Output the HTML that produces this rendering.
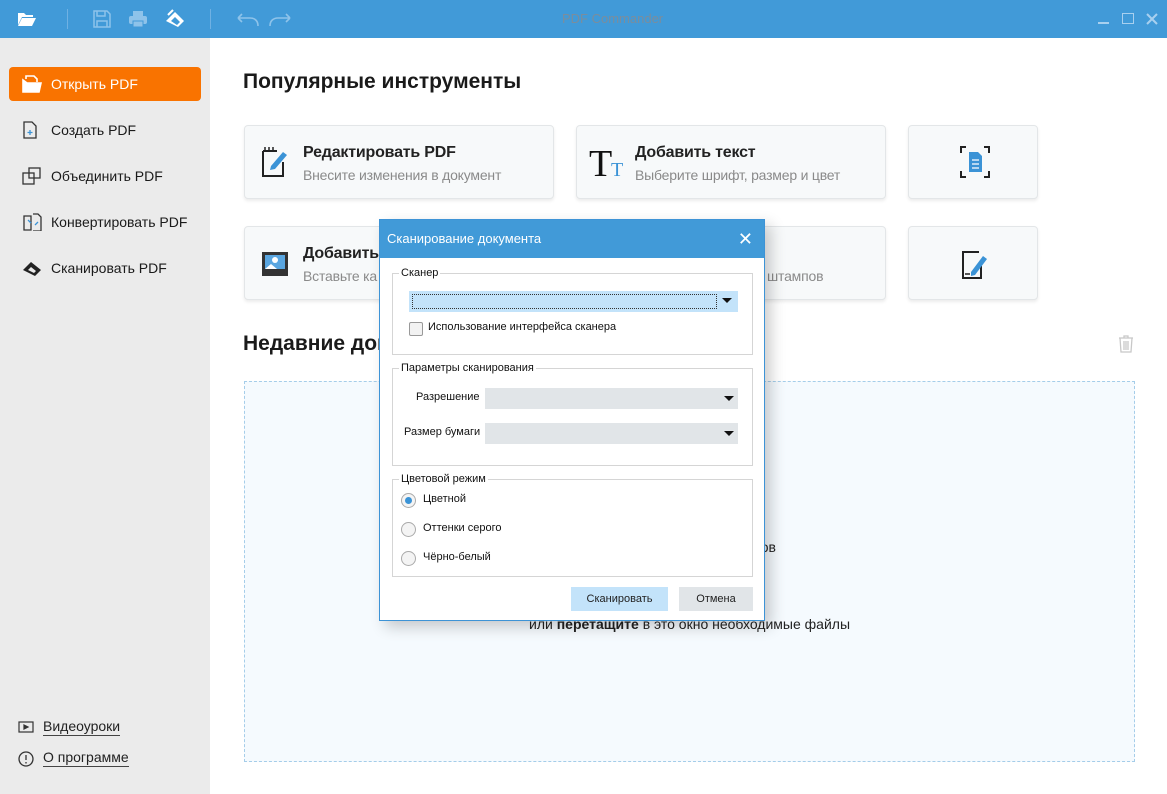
<!DOCTYPE html>
<html><head><meta charset="utf-8"><style>
*{box-sizing:border-box;margin:0;padding:0}
body{width:1167px;height:794px;position:relative;overflow:hidden;font-family:"Liberation Sans","DejaVu Sans",sans-serif;background:#fff;color:#222}
.abs{position:absolute}
#top{left:0;top:0;width:1167px;height:38px;background:#419ad8}
#side{left:0;top:38px;width:210px;height:756px;background:#ebebeb}
.nav{position:absolute;left:9px;width:192px;height:34px;font-size:14px;line-height:34px;padding-left:42px;color:#1a1a1a}
.nav svg{position:absolute;left:13px;top:8px}
.card{position:absolute;background:#f7f9fa;border:1px solid #e3e6e8;border-radius:4px;box-shadow:0 2px 3px rgba(0,0,0,.08)}
.card .t{position:absolute;left:58px;top:18px;font-size:16px;font-weight:bold;color:#222;letter-spacing:-0.2px}
.card .s{position:absolute;left:58px;top:41px;font-size:14px;color:#8a8a8a;letter-spacing:-0.2px}
.card svg{position:absolute}
#dlg{left:379px;top:219px;width:386px;height:402px;background:#fff;border:1px solid #3d93d6;box-shadow:6px 6px 14px rgba(0,0,0,.2)}
#dlg .hd{position:absolute;left:0;top:0;width:100%;height:38px;background:#419ad8;color:#fff;font-size:13px;line-height:38px;padding-left:7px}
fieldset{position:absolute;border:1px solid #d5d5d5;left:12px;width:361px}
legend{font-size:11px;margin-left:6px;padding:0 2px;color:#111}
.lbl{position:absolute;font-size:11px;color:#111}
.cb{position:absolute;background:#e1e5e8;height:21px}
.cb:after{content:"";position:absolute;right:4px;top:8px;border-left:5px solid transparent;border-right:5px solid transparent;border-top:5px solid #111}
.rad{position:absolute;left:21px;width:15px;height:15px;border-radius:50%;border:1px solid #aaa;background:#f4f4f4}
.btn{position:absolute;font-size:11px;text-align:center;line-height:24px;height:24px;top:367px}
</style></head><body>
<div id="top" class="abs">
<svg class="abs" style="left:17px;top:11px" width="20" height="16" viewBox="0 0 20 16"><path d="M1 2h6l2 2h7v2H5L1 14z" fill="#fff"/><path d="M5 7h14l-4 8H1z" fill="#fff"/></svg>
<div class="abs" style="left:67px;top:9px;width:1px;height:20px;background:#6fb1e3"></div>
<svg class="abs" style="left:93px;top:10px" width="18" height="18" viewBox="0 0 18 18" fill="none" stroke="#8ec3ea" stroke-width="1.5"><path d="M1 1h13l3 3v13H1z"/><path d="M4 1v5h8V1M4 17v-6h10v6"/></svg>
<svg class="abs" style="left:128px;top:10px" width="20" height="18" viewBox="0 0 20 18" fill="#8ec3ea"><rect x="5" y="1" width="10" height="5"/><rect x="1" y="6" width="18" height="8" rx="2"/><rect x="5" y="11" width="10" height="6" stroke="#419ad8"/></svg>
<svg class="abs" style="left:164px;top:9px" width="22" height="20" viewBox="0 0 22 20"><path d="M2 12l9-9 9 9-6 6z" fill="#fff"/><path d="M7 12l4-4 5 5-3 3z" fill="#419ad8"/><path d="M4 6l5-5" stroke="#fff" stroke-width="2"/></svg>
<div class="abs" style="left:210px;top:9px;width:1px;height:20px;background:#6fb1e3"></div>
<svg class="abs" style="left:234px;top:12px" width="60" height="16" viewBox="0 0 60 16" fill="none" stroke="#8ec3ea" stroke-width="1.6"><path d="M4 6h12c5 0 8 3 8 8M4 6l4-4M4 6l4 4"/><path d="M56 6H44c-5 0-8 3-8 8M56 6l-4-4M56 6l-4 4"/></svg>
<div class="abs" style="left:562px;top:11px;font-size:13px;color:#7b8d9c">PDF Commander</div>
<div class="abs" style="left:1098px;top:22px;width:11px;height:2px;background:#a8d0ef"></div>
<div class="abs" style="left:1122px;top:13px;width:12px;height:11px;border:1.5px solid #a8d0ef"></div>
<svg class="abs" style="left:1146px;top:13px" width="12" height="12" viewBox="0 0 12 12" stroke="#a8d0ef" stroke-width="2"><path d="M1 1l10 10M11 1L1 11"/></svg>
</div>
<div id="side" class="abs">
<div class="nav" style="top:29px;background:#f97300;border-radius:4px;color:#fff"><svg width="20" height="18" viewBox="0 0 20 18" fill="none" stroke="#fff" stroke-width="1.6"><path d="M4 4V1h8l3 3v3"/><path d="M1 5v12h16l2-9H5z" fill="#fff"/></svg>Открыть PDF</div>
<div class="nav" style="top:75px"><svg width="16" height="18" viewBox="0 0 16 18" fill="none" stroke="#333" stroke-width="1.3"><path d="M2 1h8l4 4v12H2z"/><path d="M8 9v5M5.5 11.5h5" stroke="#3b93d6"/></svg>Создать PDF</div>
<div class="nav" style="top:121px"><svg width="20" height="18" viewBox="0 0 20 18" fill="none" stroke="#333" stroke-width="1.3"><rect x="7" y="1" width="11" height="10"/><rect x="1" y="6" width="11" height="11"/></svg>Объединить PDF</div>
<div class="nav" style="top:167px"><svg width="20" height="18" viewBox="0 0 20 18" fill="none" stroke="#333" stroke-width="1.3"><path d="M2 3h7v14H2zM11 1h5l3 3v14h-8"/><path d="M6 7l3 3M13 12l3-3" stroke="#3b93d6"/></svg>Конвертировать PDF</div>
<div class="nav" style="top:213px"><svg width="20" height="18" viewBox="0 0 20 18"><path d="M1 11l8-8 10 8-6 6z" fill="#222"/><path d="M6 11l3-3 5 4-2 2z" fill="#ebebeb"/></svg>Сканировать PDF</div>
<svg class="abs" style="left:18px;top:683px" width="16" height="12" viewBox="0 0 16 12" fill="none" stroke="#333" stroke-width="1.2"><rect x="1" y="1" width="14" height="10"/><path d="M6 4l4 2-4 2z" fill="#333"/></svg>
<div class="abs" style="left:43px;top:680px;font-size:14px;border-bottom:1px solid #444;line-height:17px">Видеоуроки</div>
<svg class="abs" style="left:18px;top:713px" width="16" height="16" viewBox="0 0 16 16" fill="none" stroke="#333" stroke-width="1.3"><circle cx="8" cy="8" r="7"/><path d="M8 4v5M8 11v1.5"/></svg>
<div class="abs" style="left:43px;top:711px;font-size:14px;border-bottom:1px solid #444;line-height:17px">О программе</div>
</div>
<div class="abs" style="left:243px;top:70px;font-size:21px;font-weight:bold;color:#1a1a1a">Популярные инструменты</div>
<div class="card" style="left:244px;top:125px;width:310px;height:74px"><svg style="left:16px;top:20px" width="28" height="32" viewBox="0 0 28 32" fill="none"><path d="M2 5h14M2 5v25h20V16" stroke="#222" stroke-width="2"/><path d="M4 1v4M8 1v4M12 1v4" stroke="#222" stroke-width="1.5"/><path d="M10 20l12-14 4 3-12 14-5 1z" fill="#3b93d6"/></svg><div class="t">Редактировать PDF</div><div class="s">Внесите изменения в документ</div></div>
<div class="card" style="left:576px;top:125px;width:310px;height:74px"><div style="position:absolute;left:12px;top:16px;font-family:'Liberation Serif',serif;font-size:38px;color:#111">T</div><div style="position:absolute;left:34px;top:33px;font-family:'Liberation Serif',serif;font-size:20px;color:#3b93d6">T</div><div class="t">Добавить текст</div><div class="s">Выберите шрифт, размер и цвет</div></div>
<div class="card" style="left:908px;top:125px;width:130px;height:74px"><svg style="left:51px;top:20px" width="30" height="32" viewBox="0 0 30 32" fill="none" stroke="#222" stroke-width="2"><path d="M1 7V1h5M24 1h5v6M1 25v6h5M24 31h5v-6"/><path d="M9 6h9l4 4v16H9z" fill="#3b93d6" stroke="none"/><path d="M12 14h7M12 18h7M12 22h7" stroke="#fff" stroke-width="1.2"/></svg></div>
<div class="card" style="left:244px;top:226px;width:310px;height:74px"><svg style="left:16px;top:24px" width="28" height="26" viewBox="0 0 28 26"><rect x="1" y="1" width="26" height="24" fill="#333"/><rect x="4" y="4" width="20" height="14" fill="#5aa6e0"/><circle cx="14" cy="9" r="3" fill="#fff"/><path d="M4 18l6-5 6 5z" fill="#fff"/></svg><div class="t">Добавить</div><div class="s">Вставьте ка</div></div>
<div class="card" style="left:576px;top:226px;width:310px;height:74px"><div class="s" style="left:190px">штампов</div></div>
<div class="card" style="left:908px;top:226px;width:130px;height:74px"><svg style="left:52px;top:23px" width="28" height="30" viewBox="0 0 28 30" fill="none"><path d="M18 2H2v26h18V16" stroke="#222" stroke-width="2"/><path d="M10 22l12-16 4 3-12 16-4 1z" fill="#3b93d6"/><path d="M4 24h5" stroke="#222" stroke-width="1.5"/></svg></div>
<div class="abs" style="left:243px;top:332px;font-size:21px;font-weight:bold;color:#1a1a1a">Недавние документы</div>
<svg class="abs" style="left:1118px;top:335px" width="16" height="18" viewBox="0 0 16 18" fill="none" stroke="#c8c8c8" stroke-width="1.3"><path d="M1 3h14M6 3V1h4v2M2 3l1 14h10l1-14M6 6v9M8 6v9M10 6v9"/></svg>
<div class="abs" style="left:244px;top:381px;width:891px;height:381px;border:1px dashed #a5cde9;background:#f5fafe"></div>
<div class="abs" style="left:430px;top:539px;font-size:14px;width:346px;text-align:right">шаблонов</div>
<div class="abs" style="left:529px;top:616px;font-size:14px">или <b>перетащите</b> в это окно необходимые файлы</div>
<div id="dlg" class="abs">
<div class="hd">Сканирование документа<span style="position:absolute;right:11px;top:0;font-size:18px;font-weight:bold">✕</span></div>
<fieldset style="top:47px;height:88px"><legend>Сканер</legend></fieldset>
<div class="abs" style="left:29px;top:71px;width:329px;height:21px;background:#c3e3fa"><div style="position:absolute;left:3px;top:3px;width:305px;height:15px;border:1px dotted #333"></div></div>
<div style="position:absolute;right:32px;top:78px;border-left:5px solid transparent;border-right:5px solid transparent;border-top:5px solid #111"></div>
<div class="abs" style="left:29px;top:102px;width:14px;height:14px;border:1px solid #999;border-radius:2px;background:#f2f2f2"></div>
<div class="lbl" style="left:48px;top:101px">Использование интерфейса сканера</div>
<fieldset style="top:142px;height:104px"><legend>Параметры сканирования</legend></fieldset>
<div class="lbl" style="left:36px;top:171px">Разрешение</div>
<div class="cb" style="left:105px;top:168px;width:253px"></div>
<div class="lbl" style="left:24px;top:206px">Размер бумаги</div>
<div class="cb" style="left:105px;top:203px;width:253px"></div>
<fieldset style="top:253px;height:104px"><legend>Цветовой режим</legend></fieldset>
<div class="rad" style="top:273px"><div style="position:absolute;left:3px;top:3px;width:7px;height:7px;border-radius:50%;background:#3b93d6"></div></div>
<div class="lbl" style="left:43px;top:273px">Цветной</div>
<div class="rad" style="top:302px"></div><div class="lbl" style="left:43px;top:302px">Оттенки серого</div>
<div class="rad" style="top:331px"></div><div class="lbl" style="left:43px;top:331px">Чёрно-белый</div>
<div class="btn" style="left:191px;width:97px;background:#c3e3fa">Сканировать</div>
<div class="btn" style="left:299px;width:74px;background:#e1e5e8">Отмена</div>
</div>
</body></html>
